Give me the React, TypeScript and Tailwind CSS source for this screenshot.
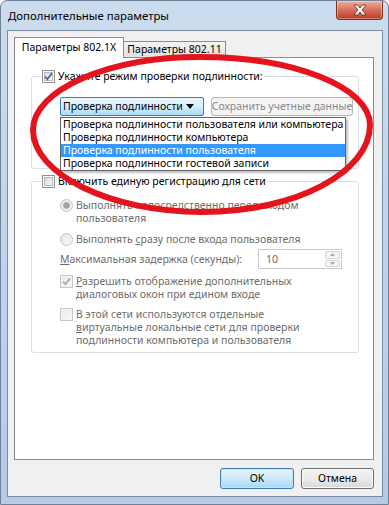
import React from "react";

function CheckBox({ checked, disabled }: { checked?: boolean; disabled?: boolean }) {
  return (
    <span
      className={
        disabled
          ? "relative inline-block w-[13px] h-[13px] shrink-0 border border-[#c6c8cb] bg-[#f4f4f4]"
          : "relative inline-block w-[13px] h-[13px] shrink-0 border border-[#8e8f8f] bg-white"
      }
    >
      <span
        className={
          disabled
            ? "absolute inset-[1px] bg-gradient-to-br from-[#ebebeb] to-[#f8f8f8]"
            : "absolute inset-[1px] border border-[#b4b8bd] bg-gradient-to-br from-[#d6dae0] to-[#fafafa]"
        }
      />
      {checked && (
        <svg className="absolute left-0 top-0" width="11" height="11" viewBox="0 0 11 11">
          <path
            d="M2.2 5.6 L4.4 8.2 L9 2.2"
            fill="none"
            stroke={disabled ? "#a9a9a9" : "#4a5f97"}
            strokeWidth="1.7"
          />
        </svg>
      )}
    </span>
  );
}

function Radio({ checked }: { checked?: boolean }) {
  return (
    <svg width="13" height="13" viewBox="0 0 13 13" className="shrink-0">
      <defs>
        <linearGradient id="rg" x1="0" y1="0" x2="1" y2="1">
          <stop offset="0" stopColor="#e2e2e2" />
          <stop offset="1" stopColor="#fafafa" />
        </linearGradient>
      </defs>
      <circle cx="6.5" cy="6.5" r="6" fill="url(#rg)" stroke="#c2c4c6" strokeWidth="1" />
      {checked && <circle cx="6.5" cy="6.5" r="3" fill="#a5a5a5" stroke="#9a9a9a" strokeWidth="0.6" />}
    </svg>
  );
}

export default function App() {
  const items = [
    "Проверка подлинности пользователя или компьютера",
    "Проверка подлинности компьютера",
    "Проверка подлинности пользователя",
    "Проверка подлинности гостевой записи",
  ];
  return (
    <div className="relative w-[389px] h-[505px] overflow-hidden rounded-t-[7px] border border-[#6f8198] bg-gradient-to-b from-[#cbdcee] via-[#bfd4ea] to-[#b3cbe5] font-['Noto_Sans',sans-serif] text-[10.5px] text-black">
      {/* title bar */}
      <div className="flex h-[29px]">
        <div className="pl-[7px] leading-[29px] text-[11.4px] text-black">Дополнительные параметры</div>
        <div className="ml-auto mr-[5px] flex h-[19px] w-[47px] items-center justify-center rounded-b-[4px] border border-t-0 border-[#7a2e24] bg-gradient-to-b from-[#eab0a2] via-[#d5705a] to-[#c0391f] shadow-[inset_0_0_0_1px_rgba(255,255,255,0.35)]">
          <svg width="14" height="12" viewBox="0 0 14 12">
            <path
              d="M1 1 H4.5 L7 4 L9.5 1 H13 L9 6 L13 11 H9.5 L7 8 L4.5 11 H1 L5 6 Z"
              fill="#ffffff"
              stroke="#5a2a22"
              strokeWidth="0.8"
              strokeLinejoin="round"
            />
          </svg>
        </div>
      </div>

      {/* client area */}
      <div className="ml-[6px] flex h-[467px] w-[376px] flex-col border border-[#7b8c9e] bg-[#f0f0f0]">
        {/* tabs */}
        <div className="flex h-[26px] items-end pl-[6px]">
          <div className="relative z-10 -mb-px flex h-[21px] w-[110px] items-center justify-center border border-b-0 border-[#898c95] bg-white">
            Параметры 802.1X
          </div>
          <div className="flex h-[16px] w-[102px] items-center justify-center border border-b-0 border-l-0 border-[#898c95] bg-gradient-to-b from-[#f3f3f3] to-[#e2e2e2]">
            Параметры 802.11
          </div>
        </div>

        {/* tab panel */}
        <div className="ml-[6px] h-[403px] w-[360px] border border-[#898c95] bg-white">
          {/* group 1 */}
          <div className="ml-[16px] mt-[18px] h-[93px] w-[328px] rounded-[3px] border border-[#d5dfe5]">
            <div className="-mt-[7px] ml-[9px] flex h-[13px] w-fit items-center gap-[3px] bg-white px-[1px]">
              <CheckBox checked />
              <span className="whitespace-nowrap leading-[13px]">
                Ук<span className="underline underline-offset-[1px]">а</span>жите режим проверки подлинности:
              </span>
            </div>
            <div className="ml-[28px] mt-[14px] flex gap-[7px]">
              <div className="relative flex h-[19px] w-[144px] items-center rounded-[2px] border border-[#3c7fb1] bg-gradient-to-b from-[#eaf6fd] via-[#d7effc] to-[#a9daf5] pl-[2px]">
                <span className="whitespace-nowrap leading-[13px]">Проверка подлинности</span>
                <svg className="ml-auto mr-[9px]" width="8" height="5" viewBox="0 0 8 5">
                  <path d="M0 0 H8 L4 5 Z" fill="#000" />
                </svg>
                {/* dropdown list */}
                <div className="absolute left-[-1px] top-[19px] z-20 w-[286px] border border-[#646464] bg-white shadow-[2px_2px_2px_rgba(0,0,0,0.25)]">
                  {items.map((t, i) => (
                    <div
                      key={t}
                      className={
                        i === 2
                          ? "h-[13px] whitespace-nowrap bg-[#3399ff] pl-[2px] leading-[13px] text-white"
                          : "h-[13px] whitespace-nowrap pl-[2px] leading-[13px] text-black"
                      }
                    >
                      {t}
                    </div>
                  ))}
                </div>
              </div>
              <div className="flex h-[19px] w-[142px] items-center justify-center overflow-hidden whitespace-nowrap rounded-[3px] border border-[#b5b8bb] bg-[#f4f4f4] text-[#8a8a8a]">
                <span className="shrink-0">Сохранить учетные данные</span>
              </div>
            </div>
          </div>

          {/* group 2 */}
          <div className="ml-[16px] mt-[12px] w-[328px] rounded-[3px] border border-[#d5dfe5] pb-[5px]">
            <div className="-mt-[7px] ml-[9px] flex h-[13px] w-fit items-center gap-[3px] bg-white px-[1px]">
              <CheckBox />
              <span className="whitespace-nowrap leading-[13px]">Включить единую регистрацию для сети</span>
            </div>
            <div className="ml-[28px] mt-[11px] flex gap-[3px] text-[#6d6d6d]">
              <Radio checked />
              <div className="leading-[13px]">
                Выполнять непосредственно перед входом
                <br />
                пользователя
              </div>
            </div>
            <div className="ml-[28px] mt-[8px] flex gap-[3px] text-[#6d6d6d]">
              <Radio />
              <div className="leading-[13px]">
                Выполнять <span className="underline underline-offset-[1px]">с</span>разу после входа пользователя
              </div>
            </div>
            <div className="ml-[28px] mt-[3px] flex items-center text-[#6d6d6d]">
              <div className="w-[198px] leading-[13px]">
                <span className="underline underline-offset-[1px]">М</span>аксимальная задержка (секунды):
              </div>
              <div className="flex h-[20px] w-[84px] items-center border border-[#c9cbcf] bg-white pl-[7px]">
                <span className="leading-[13px]">10</span>
                <div className="ml-auto mr-[1px] flex h-[16px] w-[15px] flex-col gap-px">
                  <div className="flex flex-1 items-center justify-center rounded-[2px] border border-[#d4d6d9] bg-[#f4f4f4]">
                    <svg width="5" height="3" viewBox="0 0 5 3">
                      <path d="M0 3 H5 L2.5 0 Z" fill="#a8a8a8" />
                    </svg>
                  </div>
                  <div className="flex flex-1 items-center justify-center rounded-[2px] border border-[#d4d6d9] bg-[#f4f4f4]">
                    <svg width="5" height="3" viewBox="0 0 5 3">
                      <path d="M0 0 H5 L2.5 3 Z" fill="#a8a8a8" />
                    </svg>
                  </div>
                </div>
              </div>
            </div>
            <div className="ml-[28px] mt-[6px] flex gap-[3px] text-[#6d6d6d]">
              <CheckBox checked disabled />
              <div className="leading-[13px]">
                <span className="underline underline-offset-[1px]">Р</span>азрешить отображение дополнительных
                <br />
                диалоговых окон при едином входе
              </div>
            </div>
            <div className="ml-[28px] mt-[7px] flex gap-[3px] text-[#6d6d6d]">
              <CheckBox disabled />
              <div className="leading-[13px]">
                В этой сети используются отдельные
                <br />
                <span className="underline underline-offset-[1px]">в</span>иртуальные локальные сети для проверки
                <br />
                подлинности компьютера и пользователя
              </div>
            </div>
          </div>
        </div>

        {/* buttons */}
        <div className="mt-[8px] flex justify-end gap-[7px] pr-[8px]">
          <div className="flex h-[21px] w-[74px] items-center justify-center rounded-[3px] border border-[#3c7fb1] bg-gradient-to-b from-[#e8f5fc] via-[#cde9f8] to-[#a6d6f1] shadow-[inset_0_0_0_1px_#bfe6f9]">
            OK
          </div>
          <div className="flex h-[21px] w-[73px] items-center justify-center rounded-[3px] border border-[#707070] bg-gradient-to-b from-[#f4f4f4] via-[#ebebeb] to-[#d8d8d8] shadow-[inset_0_0_0_1px_#fbfbfb]">
            Отмена
          </div>
        </div>
      </div>

      {/* red annotation ellipse */}
      <svg
        className="pointer-events-none absolute left-[-1px] top-[-1px] z-30"
        width="389"
        height="505"
        viewBox="0 0 389 505"
      >
        <path
          d="M33 130 C33 90 108 57 200 57 C294 57 370 87 370 125 C370 172 296 212 202 212 C110 212 33 174 33 130 Z"
          fill="none"
          stroke="#e3141d"
          strokeWidth="6"
        />
      </svg>
    </div>
  );
}
